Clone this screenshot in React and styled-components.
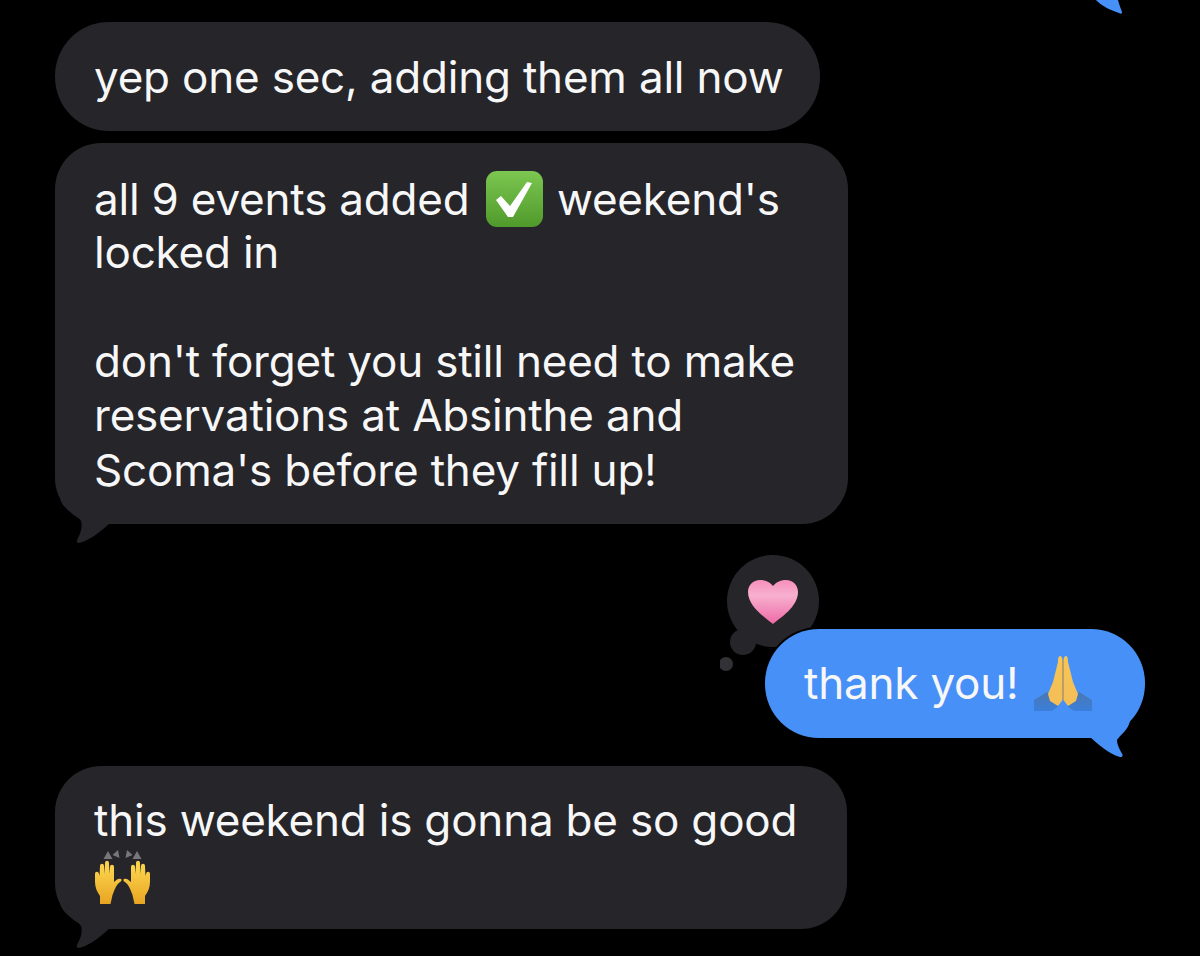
import React from "react";
import styled, { createGlobalStyle } from "styled-components";

const GlobalStyle = createGlobalStyle`
  html, body {
    margin: 0;
    padding: 0;
    background: #000;
  }
`;

const Page = styled.div`
  width: 1200px;
  height: 956px;
  overflow: hidden;
  background: #000;
  font-family: Inter, "Liberation Sans", sans-serif;
  color: #f7f7f8;
  display: flex;
  flex-direction: column;
`;

const TopEdge = styled.div`
  height: 22px;
  display: flex;
  justify-content: flex-end;
  padding-right: 76px;
  flex-shrink: 0;
`;

const Row = styled.div`
  display: flex;
  isolation: isolate;
  justify-content: ${(p) => (p.$out ? "flex-end" : "flex-start")};
  padding: ${(p) => (p.$out ? "0 55px 0 0" : "0 0 0 55px")};
  margin-top: ${(p) => p.$gap || 0}px;
`;

const Bubble = styled.div`
  position: relative;
  box-sizing: border-box;
  width: ${(p) => p.$width}px;
  padding: 27.5px 0 27.2px 39px;
  border-radius: ${(p) => p.$radius || 46}px;
  background: ${(p) => (p.$out ? "#4790f7" : "#25252a")};
  box-shadow: ${(p) => (p.$out ? "0 0 0 2px #000" : "none")};
  font-size: 44px;
  line-height: 54.4px;
  letter-spacing: -0.2px;
  white-space: nowrap;
`;

const Line = styled.div`
  height: 54.4px;
`;

const Tail = styled.svg`
  position: absolute;
  bottom: -24px;
  ${(p) => (p.$out ? "right: 0; transform: scaleX(-1);" : "left: 0;")}
`;

const Reaction = styled.svg`
  position: absolute;
  left: -45px;
  top: -74px;
  z-index: -1;
`;

const Emoji = styled.svg`
  display: inline-block;
  margin: 0 ${(p) => p.$right || 0}px 0 ${(p) => p.$left || 0}px;
  vertical-align: ${(p) => p.$drop}px;
`;

const LeftTail = () => (
  <Tail width="70" height="50" viewBox="0 0 70 50">
    <path
      d="M5 1C9 13 21 15 26 23C28 30 25 36 22 42C21 45 23 45.500 26 44.500C37 41 46 33 55 25Z"
      fill="#25252a"
    />
  </Tail>
);

const RightTail = () => (
  <Tail $out width="70" height="50" viewBox="0 0 70 50">
    <path
      d="M25 5L15 9C17 18 24 22 28 28C28 33 25 38 22.500 42.500C22 45 24 45.500 26 44.800C37 41 46 33 55 25Z"
      fill="#4790f7"
    />
  </Tail>
);

const CheckEmoji = () => (
  <Emoji $drop={-12} $left={4} $right={2} width="57" height="56" viewBox="0 0 57 56">
    <defs>
      <linearGradient id="chk" x1="0" y1="0" x2="0" y2="1">
        <stop offset="0" stopColor="#7cc651" />
        <stop offset="1" stopColor="#4f9a2b" />
      </linearGradient>
    </defs>
    <rect width="57" height="56" rx="11" fill="url(#chk)" />
    <path d="M10 29L15 25L24 35L41 11L46 12L27 46L22 46Z" fill="#fff" />
  </Emoji>
);

const HeartReaction = () => (
  <Reaction width="100" height="120" viewBox="0 0 100 120">
    <defs>
      <linearGradient id="hrt" x1="0" y1="0" x2="0" y2="1">
        <stop offset="0" stopColor="#f78fbc" />
        <stop offset="0.35" stopColor="#f7b0cf" />
        <stop offset="1" stopColor="#ee6aa6" />
      </linearGradient>
    </defs>
    <circle cx="53" cy="46" r="46" fill="#25252a" />
    <circle cx="23" cy="87" r="13" fill="#25252a" />
    <circle cx="6" cy="109" r="7" fill="#323236" />
    <path
      d="M53 69C46 63 28 52 28 37C28 30 33 25 40 25C46 25 50 27.500 53 31C56 27.500 60 25 66 25C73 25 78 30 78 37C78 52 60 63 53 69Z"
      fill="url(#hrt)"
    />
  </Reaction>
);

const PrayEmoji = () => (
  <Emoji $drop={-13} $left={3} $right={3} width="58" height="56" viewBox="0 0 58 56">
    <defs>
      <linearGradient id="pry" x1="0" y1="0" x2="0" y2="1">
        <stop offset="0" stopColor="#f7c654" />
        <stop offset="1" stopColor="#f3be57" />
      </linearGradient>
      <linearGradient id="slv" x1="0" y1="0" x2="0" y2="1">
        <stop offset="0" stopColor="#4a78b0" />
        <stop offset="1" stopColor="#3a7fdc" />
      </linearGradient>
    </defs>
    <path d="M13 36L0 44L0 55L18 55L25 50Z" fill="url(#slv)" />
    <path d="M45 36L58 44L58 55L40 55L33 50Z" fill="url(#slv)" />
    <path d="M26 0C24.500 0 24 3 24 6L19 26L14 38L16 45L24 50L28.500 44L28.500 6C28.500 3 28 0 26 0Z" fill="url(#pry)" />
    <path d="M32 0C33.500 0 34 3 34 6L39 26L44 38L42 45L34 50L29.500 44L29.500 6C29.500 3 30 0 32 0Z" fill="url(#pry)" />
    <path d="M28.500 4L29.500 4L29.500 44L28.500 44Z" fill="#d9922c" />
  </Emoji>
);

const Hand = () => (
  <path
    d="M6 55L6 47C3 43 1 38 1 33L1 25C1 22 4.500 22 5 25L5.500 27L6 17C6 14 10 14 10 17L10.500 25L11 14C11 11 15 11 15 14L15.500 25L16 18C16 15 20 15 20 18L20 33C23 30 25 29 27 30C28.500 31 27 32.500 25.500 33.500C22 36 21 40 18.500 46L16.500 55Z"
    fill="url(#hnd)"
  />
);

const RaiseEmoji = () => (
  <Emoji $drop={-14} width="57" height="56" viewBox="0 0 57 56">
    <defs>
      <linearGradient id="hnd" x1="0" y1="0" x2="0" y2="1">
        <stop offset="0.2" stopColor="#fad04a" />
        <stop offset="1" stopColor="#e8a422" />
      </linearGradient>
    </defs>
    <g fill="#77777a">
      <path d="M14 2L18.500 10L9.500 10Z" />
      <path d="M24 1L25.500 9L18.500 6Z" />
      <path d="M33 1L38.500 6L31.500 9Z" />
      <path d="M43 2L47.500 10L38.500 10Z" />
    </g>
    <Hand />
    <g transform="translate(57 0) scale(-1 1)">
      <Hand />
    </g>
  </Emoji>
);

const App = () => (
  <Page>
    <GlobalStyle />
    <TopEdge>
      <svg width="30" height="22" viewBox="0 0 30 22">
        <path d="M2 0L24 0C25 4 27 9 28 12C28 14 27 14 25 13C16 10 8 6 2 0Z" fill="#4790f7" />
      </svg>
    </TopEdge>
    <Row>
      <Bubble $width={765} $radius={54}>
        <Line>yep one sec, adding them all now</Line>
      </Bubble>
    </Row>
    <Row $gap={12}>
      <Bubble $width={793}>
        <Line>
          all 9 events added <CheckEmoji /> weekend's
        </Line>
        <Line>locked in</Line>
        <Line />
        <Line>don't forget you still need to make</Line>
        <Line>reservations at Absinthe and</Line>
        <Line>Scoma's before they fill up!</Line>
        <LeftTail />
      </Bubble>
    </Row>
    <Row $out $gap={104.6}>
      <Bubble $out $width={380} $radius={54}>
        <HeartReaction />
        <Line>
          thank you! <PrayEmoji />
        </Line>
        <RightTail />
      </Bubble>
    </Row>
    <Row $gap={28}>
      <Bubble $width={792}>
        <Line>this weekend is gonna be so good</Line>
        <Line>
          <RaiseEmoji />
        </Line>
        <LeftTail />
      </Bubble>
    </Row>
  </Page>
);

export default App;
